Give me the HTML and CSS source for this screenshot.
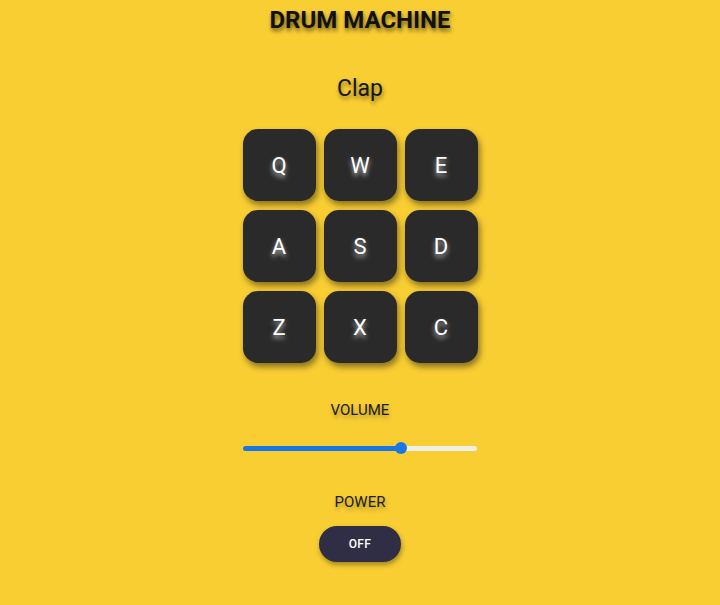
FILE: index.html
```html
<!DOCTYPE html>
<html lang="en">
<head>
<meta charset="utf-8">
<title>Drum Machine</title>
<link rel="stylesheet" href="styles.css">
</head>
<body>
<main class="machine">
  <h1 class="title">DRUM MACHINE</h1>
  <p class="display">Clap</p>
  <div class="pads">
    <button class="pad">Q</button>
    <button class="pad">W</button>
    <button class="pad">E</button>
    <button class="pad">A</button>
    <button class="pad">S</button>
    <button class="pad">D</button>
    <button class="pad">Z</button>
    <button class="pad">X</button>
    <button class="pad">C</button>
  </div>
  <p class="label label-volume">VOLUME</p>
  <div class="slider">
    <div class="slider-fill" style="width: 67.5%"></div>
    <div class="slider-thumb"></div>
    <div class="slider-rest"></div>
  </div>
  <p class="label label-power">POWER</p>
  <button class="power">OFF</button>
</main>
</body>
</html>
```
FILE: styles.css
```css
html, body {
  margin: 0;
  padding: 0;
}
body {
  background: #f9ce33;
  font-family: Roboto, "Noto Sans", "Liberation Sans", sans-serif;
  color: #111;
  width: 720px;
  height: 605px;
  overflow: hidden;
}
.machine {
  display: flex;
  flex-direction: column;
  align-items: center;
}
.title {
  margin: 6px 0 0;
  font-size: 24px;
  line-height: 28px;
  font-weight: 700;
  color: #111;
  text-shadow: 1px 3px 4px rgba(0, 0, 0, 0.55);
}
.display {
  margin: 42px 0 0;
  font-size: 23px;
  line-height: 26px;
  font-weight: 400;
  color: #151515;
  text-shadow: 1px 3px 4px rgba(0, 0, 0, 0.45);
}
.pads {
  margin-top: 27px;
  display: grid;
  grid-template-columns: repeat(3, 73px);
  grid-auto-rows: 72px;
  column-gap: 8px;
  row-gap: 9px;
}
.pad {
  border: none;
  padding: 0;
  margin: 0;
  background: #2a2a2b;
  border-radius: 15px;
  box-shadow: 2px 4px 6px rgba(0, 0, 0, 0.45);
  color: #fff;
  font-family: Roboto, "Noto Sans", sans-serif;
  font-size: 22px;
  font-weight: 400;
  text-shadow: 0 3px 5px rgba(255, 255, 255, 0.7);
}
.label {
  margin: 0;
  font-size: 15px;
  line-height: 18px;
  color: #1a1a1a;
  text-shadow: 1px 3px 4px rgba(0, 0, 0, 0.3);
}
.label-volume {
  margin-top: 38px;
}
.slider {
  margin-top: 23px;
  width: 234px;
  height: 12px;
  display: flex;
  align-items: center;
}
.slider-fill {
  height: 5px;
  background: #1877e6;
  border-radius: 3px 0 0 3px;
}
.slider-thumb {
  width: 12px;
  height: 12px;
  margin: 0 -6px;
  border-radius: 50%;
  background: #1877e6;
  position: relative;
  z-index: 1;
}
.slider-rest {
  flex: 1;
  height: 5px;
  background: #efefe9;
  border-radius: 0 3px 3px 0;
}
.label-power {
  margin-top: 39px;
}
.power {
  margin-top: 15px;
  width: 82px;
  height: 36px;
  border: none;
  border-radius: 18px;
  background: #2f2e45;
  color: #fff;
  font-family: Roboto, "Noto Sans", sans-serif;
  font-size: 12px;
  font-weight: 500;
  letter-spacing: 0.3px;
  box-shadow: 1px 3px 5px rgba(0, 0, 0, 0.35);
  padding: 0;
}
```
